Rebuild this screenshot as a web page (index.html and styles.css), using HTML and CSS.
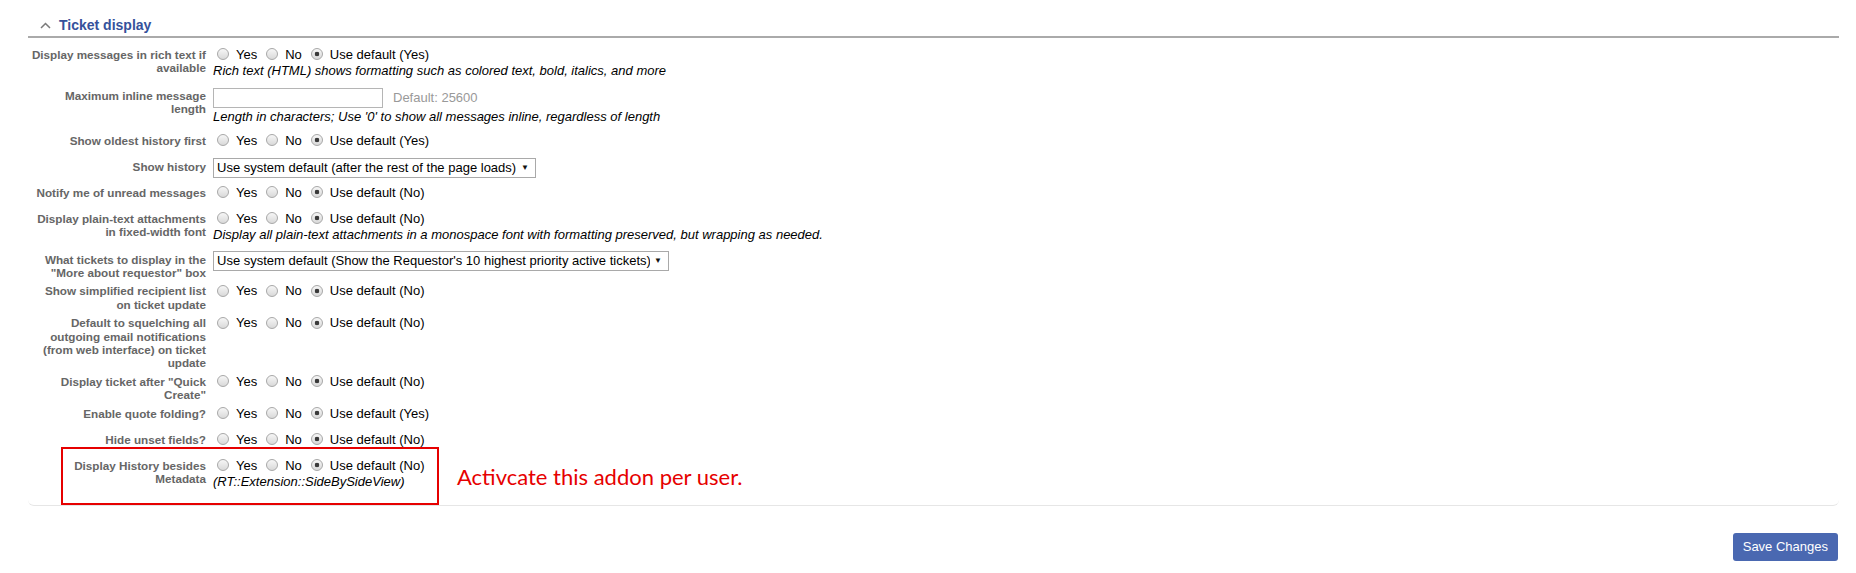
FILE: index.html
```html
<!DOCTYPE html>
<html lang="en">
<head>
<meta charset="utf-8">
<title>Preferences - Ticket display</title>
<link rel="stylesheet" href="styles.css">
</head>
<body>
<div class="page">
  <section class="titlebox">
    <div class="titlebox-title">
      <svg class="chev" width="11" height="7" viewBox="0 0 11 7"><polyline points="1,6 5.5,1.5 10,6" fill="none" stroke="#7a7a7a" stroke-width="1.5"/></svg>
      <span class="title-text">Ticket display</span>
    </div>
    <div class="titlebox-body">
      <div class="row">
        <div class="label">Display messages in rich text if available</div>
        <div class="value">
          <div class="choices">
            <input type="radio" class="radio" name="r1"><label class="opt">Yes</label>
            <input type="radio" class="radio" name="r1"><label class="opt">No</label>
            <input type="radio" class="radio" name="r1" checked><label class="opt">Use default (Yes)</label>
          </div>
          <div class="hint">Rich text (HTML) shows formatting such as colored text, bold, italics, and more</div>
        </div>
      </div>

      <div class="row">
        <div class="label">Maximum inline message length</div>
        <div class="value value-input">
          <div class="input-line">
            <input type="text" class="text-input">
            <span class="default-note">Default: 25600</span>
          </div>
          <div class="hint">Length in characters; Use '0' to show all messages inline, regardless of length</div>
        </div>
      </div>

      <div class="row">
        <div class="label">Show oldest history first</div>
        <div class="value">
          <div class="choices">
            <input type="radio" class="radio" name="r3"><label class="opt">Yes</label>
            <input type="radio" class="radio" name="r3"><label class="opt">No</label>
            <input type="radio" class="radio" name="r3" checked><label class="opt">Use default (Yes)</label>
          </div>
        </div>
      </div>

      <div class="row">
        <div class="label">Show history</div>
        <div class="value value-select">
          <span class="select-wrap">
            <select class="select w-history"><option>Use system default (after the rest of the page loads)</option></select>
          </span>
        </div>
      </div>

      <div class="row">
        <div class="label">Notify me of unread messages</div>
        <div class="value">
          <div class="choices">
            <input type="radio" class="radio" name="r5"><label class="opt">Yes</label>
            <input type="radio" class="radio" name="r5"><label class="opt">No</label>
            <input type="radio" class="radio" name="r5" checked><label class="opt">Use default (No)</label>
          </div>
        </div>
      </div>

      <div class="row">
        <div class="label">Display plain-text attachments in fixed-width font</div>
        <div class="value">
          <div class="choices">
            <input type="radio" class="radio" name="r6"><label class="opt">Yes</label>
            <input type="radio" class="radio" name="r6"><label class="opt">No</label>
            <input type="radio" class="radio" name="r6" checked><label class="opt">Use default (No)</label>
          </div>
          <div class="hint">Display all plain-text attachments in a monospace font with formatting preserved, but wrapping as needed.</div>
        </div>
      </div>

      <div class="row">
        <div class="label">What tickets to display in the "More about requestor" box</div>
        <div class="value value-select">
          <span class="select-wrap">
            <select class="select w-more"><option>Use system default (Show the Requestor's 10 highest priority active tickets)</option></select>
          </span>
        </div>
      </div>

      <div class="row">
        <div class="label">Show simplified recipient list on ticket update</div>
        <div class="value">
          <div class="choices">
            <input type="radio" class="radio" name="r8"><label class="opt">Yes</label>
            <input type="radio" class="radio" name="r8"><label class="opt">No</label>
            <input type="radio" class="radio" name="r8" checked><label class="opt">Use default (No)</label>
          </div>
        </div>
      </div>

      <div class="row">
        <div class="label">Default to squelching all outgoing email notifications (from web interface) on ticket update</div>
        <div class="value">
          <div class="choices">
            <input type="radio" class="radio" name="r9"><label class="opt">Yes</label>
            <input type="radio" class="radio" name="r9"><label class="opt">No</label>
            <input type="radio" class="radio" name="r9" checked><label class="opt">Use default (No)</label>
          </div>
        </div>
      </div>

      <div class="row">
        <div class="label">Display ticket after "Quick Create"</div>
        <div class="value">
          <div class="choices">
            <input type="radio" class="radio" name="r10"><label class="opt">Yes</label>
            <input type="radio" class="radio" name="r10"><label class="opt">No</label>
            <input type="radio" class="radio" name="r10" checked><label class="opt">Use default (No)</label>
          </div>
        </div>
      </div>

      <div class="row">
        <div class="label">Enable quote folding?</div>
        <div class="value">
          <div class="choices">
            <input type="radio" class="radio" name="r11"><label class="opt">Yes</label>
            <input type="radio" class="radio" name="r11"><label class="opt">No</label>
            <input type="radio" class="radio" name="r11" checked><label class="opt">Use default (Yes)</label>
          </div>
        </div>
      </div>

      <div class="row">
        <div class="label">Hide unset fields?</div>
        <div class="value">
          <div class="choices">
            <input type="radio" class="radio" name="r12"><label class="opt">Yes</label>
            <input type="radio" class="radio" name="r12"><label class="opt">No</label>
            <input type="radio" class="radio" name="r12" checked><label class="opt">Use default (No)</label>
          </div>
        </div>
      </div>

      <div class="row">
        <div class="label">Display History besides Metadata</div>
        <div class="value">
          <div class="choices">
            <input type="radio" class="radio" name="r13"><label class="opt">Yes</label>
            <input type="radio" class="radio" name="r13"><label class="opt">No</label>
            <input type="radio" class="radio" name="r13" checked><label class="opt">Use default (No)</label>
          </div>
          <div class="hint">(RT::Extension::SideBySideView)</div>
        </div>
      </div>
    </div>
  </section>

  <div class="actions">
    <button type="button" class="btn-save">Save Changes</button>
  </div>

  <div class="annotation-box"></div>
  <div class="annotation-text">Activcate this addon per user.</div>
</div>
</body>
</html>
```

FILE: styles.css
```css
html, body {
  margin: 0;
  padding: 0;
  background: #ffffff;
}

body {
  font-family: "Liberation Sans", Arial, sans-serif;
  font-size: 13px;
  color: #000;
}

.page {
  position: relative;
  padding: 0 17px 0 28px;
}

/* ---------- title bar ---------- */
.titlebox-title {
  display: flex;
  align-items: center;
  box-sizing: border-box;
  height: 38px;
  padding: 17px 0 3px 12px;
  border-bottom: 2px solid #aaaaaa;
}

.chev {
  display: block;
  margin-right: 8px;
}

.title-text {
  font-weight: bold;
  font-size: 14px;
  line-height: 16px;
  color: #35519b;
}

/* ---------- body ---------- */
.titlebox-body {
  padding: 6.5px 0 8px;
  border-bottom: 1px solid #e6e6e6;
  border-radius: 0 0 6px 6px;
}

.row {
  display: flex;
  align-items: flex-start;
}

.label {
  flex: none;
  width: 176px;
  padding: 3px 0 2px 2px;
  text-align: right;
  font-weight: bold;
  font-size: 11.7px;
  line-height: 13.4px;
  color: #666666;
}

.value {
  flex: 1;
  padding: 1px 0 8px 7px;
}

.value-input {
  padding-bottom: 7px;
}

.value-select {
  padding-bottom: 5px;
}

.choices {
  display: flex;
  align-items: center;
  height: 17px;
  white-space: nowrap;
}

.radio {
  -webkit-appearance: none;
  appearance: none;
  flex: none;
  box-sizing: border-box;
  width: 12px;
  height: 12px;
  margin: 0 7px 0 9px;
  border: 1px solid #a8a8a8;
  border-radius: 50%;
  background: linear-gradient(#f6f6f6, #d9d9d9);
}

.radio:first-child {
  margin-left: 4px;
}

.radio:checked {
  background:
    radial-gradient(circle at center, #3a3a3a 0, #3a3a3a 2px, rgba(0,0,0,0) 2.6px),
    linear-gradient(#f6f6f6, #d9d9d9);
}

.opt {
  line-height: 17px;
}

.hint {
  font-style: italic;
  line-height: 15px;
  white-space: nowrap;
}

.input-line {
  display: flex;
  align-items: center;
  height: 22px;
}

.text-input {
  box-sizing: border-box;
  width: 170px;
  height: 20px;
  margin: 0;
  border: 1px solid #b5b5b5;
  border-radius: 0;
  background: #fff;
  font: inherit;
}

.default-note {
  margin-left: 10px;
  color: #999999;
}

.select-wrap {
  position: relative;
  display: inline-block;
  vertical-align: top;
}

.select-wrap::after {
  content: "\25BC";
  position: absolute;
  right: 7px;
  top: 5px;
  font-size: 8px;
  line-height: 10px;
  color: #111;
  pointer-events: none;
}

.select {
  -webkit-appearance: none;
  appearance: none;
  display: block;
  box-sizing: border-box;
  height: 20px;
  margin: 0;
  padding: 0 18px 0 3px;
  border: 1px solid #a9a9a9;
  border-radius: 0;
  background: #fff;
  color: #000;
  font-family: "Liberation Sans", Arial, sans-serif;
  font-size: 13px;
}

.w-history {
  width: 323px;
}

.w-more {
  width: 456px;
}

/* ---------- actions ---------- */
.actions {
  display: flex;
  justify-content: flex-end;
  padding-top: 27px;
}

.btn-save {
  height: 28px;
  padding: 0 10px;
  border: none;
  border-radius: 3px;
  background: #4a68b1;
  color: #ffffff;
  font-family: "Liberation Sans", Arial, sans-serif;
  font-size: 13px;
  margin-right: 1px;
}

/* ---------- screenshot annotation (overlay) ---------- */
.annotation-box {
  position: absolute;
  left: 61px;
  top: 447px;
  box-sizing: border-box;
  width: 378px;
  height: 58px;
  border: 2px solid #e60000;
}

.annotation-text {
  position: absolute;
  left: 457px;
  top: 465px;
  font-family: Lato, "Open Sans", sans-serif;
  font-size: 22px;
  line-height: 24px;
  color: #e60000;
  white-space: nowrap;
}
```
